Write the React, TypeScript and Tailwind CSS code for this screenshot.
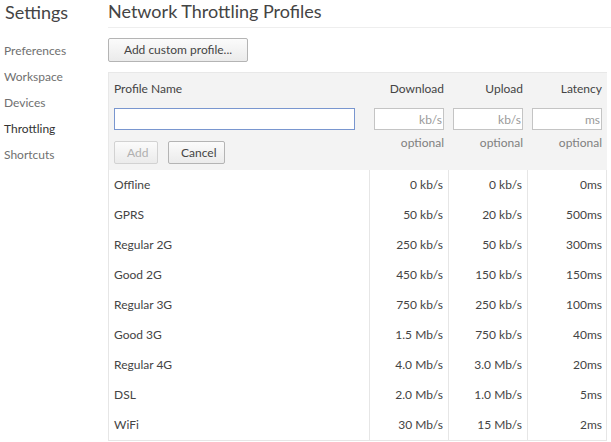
import React from 'react';

const NAV = ['Preferences', 'Workspace', 'Devices', 'Throttling', 'Shortcuts'];

const PROFILES: Array<{ name: string; down: string; up: string; latency: string }> = [
  { name: 'Offline', down: '0 kb/s', up: '0 kb/s', latency: '0ms' },
  { name: 'GPRS', down: '50 kb/s', up: '20 kb/s', latency: '500ms' },
  { name: 'Regular 2G', down: '250 kb/s', up: '50 kb/s', latency: '300ms' },
  { name: 'Good 2G', down: '450 kb/s', up: '150 kb/s', latency: '150ms' },
  { name: 'Regular 3G', down: '750 kb/s', up: '250 kb/s', latency: '100ms' },
  { name: 'Good 3G', down: '1.5 Mb/s', up: '750 kb/s', latency: '40ms' },
  { name: 'Regular 4G', down: '4.0 Mb/s', up: '3.0 Mb/s', latency: '20ms' },
  { name: 'DSL', down: '2.0 Mb/s', up: '1.0 Mb/s', latency: '5ms' },
  { name: 'WiFi', down: '30 Mb/s', up: '15 Mb/s', latency: '2ms' },
];

const NUM_COLS = [
  { label: 'Download', unit: 'kb/s' },
  { label: 'Upload', unit: 'kb/s' },
  { label: 'Latency', unit: 'ms' },
];

const btn =
  'h-[23px] px-[12px] text-[12px] leading-none rounded-[2px] border bg-gradient-to-b from-[#fbfbfb] to-[#ebebeb]';

export default function App() {
  return (
    <div className="flex w-[611px] h-[442px] overflow-hidden bg-white text-[#444] font-['Lato','Noto_Sans',sans-serif] text-[12px]">
      {/* Sidebar */}
      <aside className="w-[108px] shrink-0">
        <h1 className="h-[27px] pl-[5px] pt-[1px] text-[18px] leading-[22px] text-[#444]">Settings</h1>
        <nav className="pt-[16px] pl-[4px] flex flex-col">
          {NAV.map(item => (
            <div
              key={item}
              className={`h-[26px] leading-[16px] ${item === 'Throttling' ? 'text-[#333]' : 'text-[#707070]'}`}
            >
              {item}
            </div>
          ))}
        </nav>
      </aside>

      {/* Content */}
      <main className="flex-1 min-w-0">
        <header className="h-[28px] border-b border-[#eeeeee] pt-[1px]">
          <h2 className="text-[18px] leading-[20px] text-[#444]">Network Throttling Profiles</h2>
        </header>

        <div className="pr-[4px]">
          <div className="pt-[10px]">
            <button className={`${btn} w-[140px] h-[24px] border-[#b4b4b4] text-[#444]`}>Add custom profile...</button>
          </div>

          {/* Edit panel */}
          <div className="mt-[10px] flex bg-[#f3f3f3] border-t border-l border-[#e8e8e8] h-[98px]">
            <div className="w-[260px] pl-[5px] pr-[14px] pt-[8px] flex flex-col">
              <div className="h-[16px] leading-[16px]">Profile Name</div>
              <input className="mt-[11px] h-[22px] w-full border border-[#7996cf] bg-white outline-none" />
              <div className="mt-[11px] flex gap-[10px]">
                <button className={`${btn} w-[44px] px-0 border-[#d2d2d2] text-[#b0b0b0]`}>Add</button>
                <button className={`${btn} w-[57px] px-0 border-[#b4b4b4] text-[#444]`}>Cancel</button>
              </div>
            </div>
            {NUM_COLS.map(c => (
              <div key={c.label} className="w-[79px] pl-[5px] pr-[4px] pt-[8px] flex flex-col items-end">
                <div className="h-[16px] leading-[16px]">{c.label}</div>
                <input
                  placeholder={c.unit}
                  className="mt-[11px] h-[22px] w-[70px] border border-[#c4c4c4] bg-white text-right pr-[1px] outline-none placeholder:text-[#9a9a9a]"
                />
                <div className="mt-[5px] h-[16px] leading-[16px] text-[#808080]">optional</div>
              </div>
            ))}
          </div>

          {/* Profiles list */}
          <div className="border-l border-r border-b border-[#e6e6e6]">
            {PROFILES.map(p => (
              <div key={p.name} className="flex h-[30px] items-center">
                <div className="w-[260px] h-full flex items-center pl-[5px]">{p.name}</div>
                <div className="w-[79px] h-full flex items-center justify-end pr-[5px] border-l border-[#e6e6e6]">{p.down}</div>
                <div className="w-[79px] h-full flex items-center justify-end pr-[5px] border-l border-[#e6e6e6]">{p.up}</div>
                <div className="flex-1 h-full flex items-center justify-end pr-[4px] border-l border-[#e6e6e6]">{p.latency}</div>
              </div>
            ))}
          </div>
        </div>
      </main>
    </div>
  );
}
